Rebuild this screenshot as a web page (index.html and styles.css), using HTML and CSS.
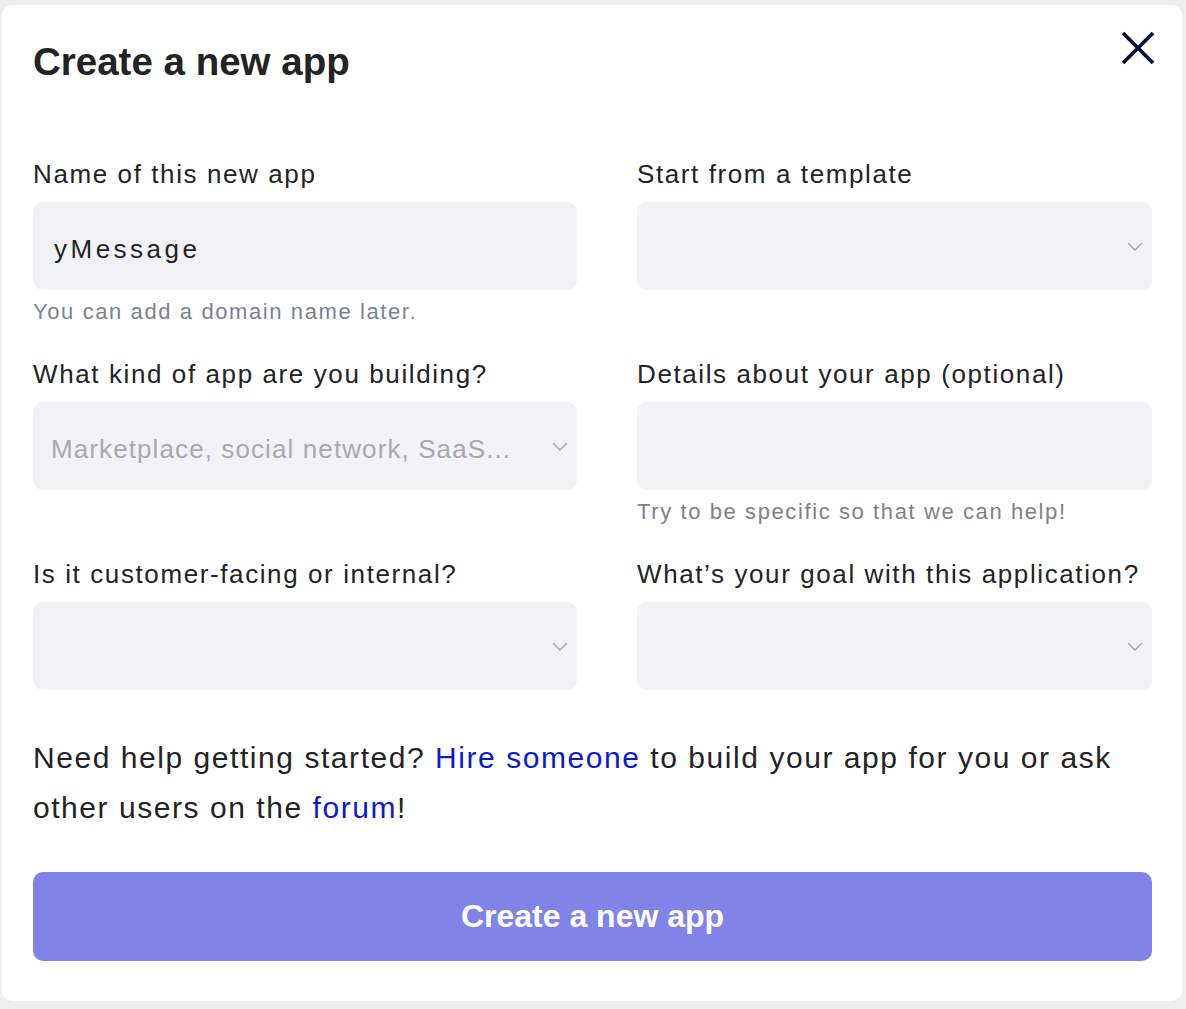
FILE: index.html
```html
<!DOCTYPE html>
<html lang="en">
<head>
<meta charset="utf-8">
<title>Create a new app</title>
<link rel="stylesheet" href="styles.css">
</head>
<body>
<div class="modal">
  <h1 class="title">Create a new app</h1>
  <button class="close" type="button" aria-label="Close">
    <svg width="34" height="34" viewBox="0 0 34 34"><path d="M2 2 L32 32 M32 2 L2 32" stroke="#0c0c3c" stroke-width="3.8" fill="none"/></svg>
  </button>
  <div class="grid">
    <div class="field">
      <label class="label">Name of this new app</label>
      <input class="control input" type="text" value="yMessage">
      <div class="hint">You can add a domain name later.</div>
    </div>
    <div class="field">
      <label class="label">Start from a template</label>
      <div class="select-wrap">
        <div class="control select"></div>
        <svg class="chevron" width="16" height="9" viewBox="0 0 16 9"><polyline points="1,1 8,8 15,1" fill="none" stroke="#a4a4a6" stroke-width="1.4"/></svg>
      </div>
    </div>
    <div class="field">
      <label class="label">What kind of app are you building?</label>
      <div class="select-wrap">
        <div class="control select placeholder">Marketplace, social network, SaaS...</div>
        <svg class="chevron" width="16" height="9" viewBox="0 0 16 9"><polyline points="1,1 8,8 15,1" fill="none" stroke="#a4a4a6" stroke-width="1.4"/></svg>
      </div>
    </div>
    <div class="field">
      <label class="label">Details about your app (optional)</label>
      <textarea class="control textarea"></textarea>
      <div class="hint">Try to be specific so that we can help!</div>
    </div>
    <div class="field">
      <label class="label">Is it customer-facing or internal?</label>
      <div class="select-wrap">
        <div class="control select"></div>
        <svg class="chevron" width="16" height="9" viewBox="0 0 16 9"><polyline points="1,1 8,8 15,1" fill="none" stroke="#a4a4a6" stroke-width="1.4"/></svg>
      </div>
    </div>
    <div class="field">
      <label class="label">What’s your goal with this application?</label>
      <div class="select-wrap">
        <div class="control select"></div>
        <svg class="chevron" width="16" height="9" viewBox="0 0 16 9"><polyline points="1,1 8,8 15,1" fill="none" stroke="#a4a4a6" stroke-width="1.4"/></svg>
      </div>
    </div>
  </div>
  <p class="help">Need help getting started? <a href="#">Hire someone</a> to build your app for you or ask other users on the <a href="#">forum</a>!</p>
  <button class="submit" type="button">Create a new app</button>
</div>
</body>
</html>
```
FILE: styles.css
```css
html, body {
  margin: 0;
  padding: 0;
}
body {
  background: #eeeeee;
  padding: 5px 0 0 2px;
  font-family: "Liberation Sans", Arial, sans-serif;
  color: #232323;
}
.modal {
  position: relative;
  width: 1180px;
  box-sizing: border-box;
  padding: 34px 30px 40px 31px;
  background: #ffffff;
  border-radius: 10px;
}
.title {
  margin: 0;
  font-size: 38.5px;
  line-height: 46px;
  font-weight: 700;
  color: #232323;
}
.close {
  position: absolute;
  top: 26px;
  right: 27px;
  width: 34px;
  height: 34px;
  padding: 0;
  border: 0;
  background: none;
  cursor: pointer;
}
.close svg {
  display: block;
}
.grid {
  margin-top: 74px;
  display: grid;
  grid-template-columns: 544px 515px;
  column-gap: 60px;
  row-gap: 34px;
  align-items: start;
}
.field {
  display: flex;
  flex-direction: column;
}
.label {
  display: block;
  font-size: 26px;
  line-height: 30px;
  letter-spacing: 1.6px;
  color: #232323;
  margin-bottom: 13px;
}
.control {
  display: block;
  width: 100%;
  height: 88px;
  box-sizing: border-box;
  border: 0;
  border-radius: 10px;
  background: #f1f2f6;
  font-family: "Liberation Sans", Arial, sans-serif;
  font-size: 26px;
  color: #232323;
  outline: none;
  margin: 0;
}
.input {
  padding: 6px 20px 0 21px;
  letter-spacing: 3.5px;
}
.textarea {
  resize: none;
  padding: 20px;
}
.select-wrap {
  position: relative;
}
.select {
  display: flex;
  align-items: center;
  padding: 6px 40px 0 18px;
  line-height: 30px;
  white-space: nowrap;
  overflow: hidden;
}
.placeholder {
  color: #a9a9ab;
  letter-spacing: 1.1px;
}
.chevron {
  position: absolute;
  right: 9px;
  top: 40px;
  display: block;
}
.hint {
  margin-top: 9px;
  font-size: 22px;
  line-height: 26px;
  letter-spacing: 1.6px;
  color: #7b8290;
}
.help {
  margin: 43px 0 0;
  font-size: 30px;
  line-height: 50px;
  letter-spacing: 1.55px;
  color: #232323;
}
.help a {
  color: #0b1ad2;
  text-decoration: none;
}
.submit {
  display: flex;
  align-items: center;
  justify-content: center;
  margin-top: 39px;
  width: 100%;
  height: 89px;
  border: 0;
  border-radius: 10px;
  background: #8084e6;
  color: #ffffff;
  font-family: "Liberation Sans", Arial, sans-serif;
  font-size: 32px;
  font-weight: 700;
  cursor: pointer;
}
```
